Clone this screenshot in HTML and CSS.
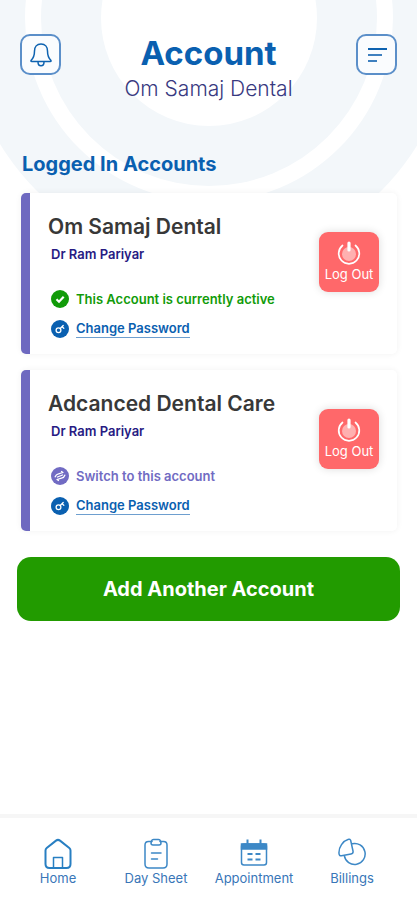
FILE: index.html
```html
<!DOCTYPE html>
<html lang="en">
<head>
<meta charset="utf-8">
<meta name="viewport" content="width=device-width, initial-scale=1">
<title>Account</title>
<link rel="stylesheet" href="styles.css">
</head>
<body>
<svg width="0" height="0" class="sprite" aria-hidden="true">
  <symbol id="power" viewBox="0 0 24 24">
    <circle cx="12" cy="13" r="7" fill="#ffb0b0"/>
    <path d="M5.500 4.500A10.300 10.300 0 1 0 18.500 4.500" fill="none" stroke="#fff" stroke-width="1.700" stroke-linecap="round"/>
    <path d="M12 2v7" stroke="#fff" stroke-width="3.200" stroke-linecap="round"/>
  </symbol>
  <symbol id="key" viewBox="0 0 18 18">
    <circle cx="9" cy="9" r="9" fill="#0a60b0"/>
    <circle cx="7.500" cy="10.200" r="2.400" fill="none" stroke="#fff" stroke-width="1.300"/>
    <path d="M9.200 8.500l3-3M11 6.700l1.800 1.600" fill="none" stroke="#fff" stroke-width="1.300" stroke-linecap="round"/>
  </symbol>
</svg>
<div class="screen">
  <svg class="rings" viewBox="0 0 488 262" aria-hidden="true">
    <circle cx="244" cy="18" r="244" fill="#f3f7fa"/>
    <circle cx="244" cy="18" r="184" fill="#fff"/>
    <circle cx="244" cy="18" r="168" fill="#f3f7fa"/>
    <circle cx="244" cy="18" r="108" fill="#fff"/>
  </svg>
  <header class="header">
    <button class="icon-button" aria-label="Notifications">
      <svg width="24" height="26" viewBox="0 0 24 26" fill="none" stroke="#0d62b0" stroke-width="1.500" stroke-linecap="round" stroke-linejoin="round">
        <path d="M12 2C7.800 2 5.500 5 5.500 9c0 5-1 7-3.300 9.200-.6.700-.3 1.300.6 1.300h18.400c.9 0 1.200-.6.600-1.300C19.500 16 18.500 14 18.500 9c0-4-2.300-7-6.500-7zM9 20c0 2 1.200 3.800 3 3.800s3-1.800 3-3.800"/>
      </svg>
    </button>
    <div class="heading">
      <h1>Account</h1>
      <p>Om Samaj Dental</p>
    </div>
    <button class="icon-button" aria-label="Menu">
      <svg width="24" height="26" viewBox="0 0 24 26" fill="none" stroke="#0d62b0" stroke-width="2">
        <path d="M3 7h19"/><path d="M3 13h14M3 19h9" stroke="#3f80bf"/>
      </svg>
    </button>
  </header>
  <main class="main">
    <h2 class="section-title">Logged In Accounts</h2>
    <article class="card">
      <div class="details">
        <h3>Om Samaj Dental</h3>
        <p class="doctor">Dr Ram Pariyar</p>
        <p class="row active">
          <svg width="18" height="18" viewBox="0 0 18 18" aria-hidden="true"><circle cx="9" cy="9" r="9" fill="#119b09"/><path d="M5.500 9.200l2.500 2.500 4.700-5" fill="none" stroke="#fff" stroke-width="2.200"/></svg>
          <span>This Account is currently active</span>
        </p>
        <a class="row change" href="#password"><svg width="18" height="18" aria-hidden="true"><use href="#key"/></svg><span>Change Password</span></a>
      </div>
      <button class="logout"><svg width="24" height="24" aria-hidden="true"><use href="#power"/></svg>Log Out</button>
    </article>
    <article class="card">
      <div class="details">
        <h3>Adcanced Dental Care</h3>
        <p class="doctor">Dr Ram Pariyar</p>
        <a class="row switch" href="#switch">
          <svg width="18" height="18" viewBox="0 0 18 18" aria-hidden="true"><circle cx="9" cy="9" r="9" fill="#716bc3"/><path d="M4.200 9.800Q5 7.300 7.500 6.800L12 5.500l-1.500-1M13.800 8.200q-.8 2.500-3.300 3L6 12.500l1.500 1M6.500 10l5-2" fill="none" stroke="#fff" stroke-width="1.300" stroke-linecap="round" stroke-linejoin="round"/></svg>
          <span>Switch to this account</span>
        </a>
        <a class="row change" href="#password"><svg width="18" height="18" aria-hidden="true"><use href="#key"/></svg><span>Change Password</span></a>
      </div>
      <button class="logout"><svg width="24" height="24" aria-hidden="true"><use href="#power"/></svg>Log Out</button>
    </article>
    <button class="add">Add Another Account</button>
  </main>
  <nav class="tabs">
    <a href="#home">
      <svg width="28" height="32" viewBox="0 0 28 32" fill="none" stroke="#287fc2" stroke-width="2" stroke-linejoin="round"><path d="M1.500 12.500q0-1.500 1.200-2.500L12 2.600q2-1.500 4 0l9.300 7.400q1.200 1 1.200 2.500V26q0 4-4 4h-17q-4 0-4-4z"/><path d="M9.500 30V19.500h9V30" stroke-width="1.500"/></svg>
      Home</a>
    <a href="#day-sheet">
      <svg width="28" height="32" viewBox="0 0 28 32" fill="none" stroke="#3d88c6" stroke-width="1.500" stroke-linecap="round" stroke-linejoin="round"><path d="M10 3.500H6.500q-3.500 0-3.500 3.500v19q0 4 4 4h14q4 0 4-4V7q0-3.500-3.500-3.500H18"/><path d="M11.500 1.500h5q1.500 0 2 1.500l.5 2q0 2-2 2h-6q-2 0-2-2l.5-2q.5-1.500 2-1.500z"/><path d="M9.500 15h9.500M9.500 21h6"/></svg>
      Day Sheet</a>
    <a href="#appointment">
      <svg width="28" height="32" viewBox="0 0 28 32" fill="none" stroke="#3d88c6" stroke-width="1.500"><rect x="1.500" y="6" width="25" height="21" rx="2.500"/><path d="M1.500 6h25v5h-25z" fill="#3d88c6"/><path d="M7.500 1.500V7M20.500 1.500V7" stroke-width="2"/><path d="M7.500 16h5M15.500 16h5M7.500 21.500h5M15.500 21.500h5" stroke-width="2"/></svg>
      Appointment</a>
    <a href="#billings">
      <svg class="pie" width="28" height="32" viewBox="0 0 28 32" fill="none" stroke="#3d88c6" stroke-width="1.500" stroke-linecap="round" stroke-linejoin="round"><path d="M10.500 1.300C5 3 .5 9 1 15.500q.1 2.500 2.500 2.300L13 16q2.500-.5 2-3L12.700 2.500q-.5-1.800-2.200-1.200z"/><path d="M14 5.800A10.500 10.500 0 1 1 6.300 17.700"/></svg>
      Billings</a>
  </nav>
</div>
</body>
</html>
```
FILE: styles.css
```css
* { box-sizing: border-box; }
body {
  margin: 0;
  background: #fff;
  font-family: Inter, "Open Sans", sans-serif;
}
h1, h2, h3, p { margin: 0; }
button { font-family: inherit; border: 0; padding: 0; cursor: pointer; }
a { color: inherit; text-decoration: none; }
svg { flex-shrink: 0; }
.sprite { position: absolute; }
.screen {
  position: relative;
  min-height: 100vh;
  display: flex;
  flex-direction: column;
  overflow: hidden;
}
.rings {
  position: absolute;
  top: 0;
  left: 50%;
  width: 488px;
  transform: translateX(-50%);
}
.header, .main, .tabs { position: relative; }
.header {
  display: flex;
  justify-content: space-between;
  align-items: flex-start;
  padding: 34px 20px 0;
}
.icon-button {
  width: 41px;
  height: 41px;
  display: grid;
  place-items: center;
  background: #fafcfe;
  border: 2px solid #5b8fc9;
  border-radius: 10px;
}
.heading { text-align: center; }
h1 {
  font-size: 33px;
  line-height: 38px;
  font-weight: 700;
  color: #0a60b0;
}
.heading p {
  margin-top: 3px;
  font-size: 21px;
  line-height: 28px;
  font-weight: 300;
  color: #38397f;
}
.main {
  flex: 1;
  display: flex;
  flex-direction: column;
  padding: 49px 20px 24px;
}
.section-title {
  padding-left: 2px;
  font-size: 20px;
  line-height: 24px;
  font-weight: 700;
  color: #0a60b0;
}
.card {
  display: flex;
  justify-content: space-between;
  align-items: flex-start;
  min-height: 161px;
  margin: 17px 0 0 1px;
  padding: 20px 18px 12px 18px;
  background: #fff;
  border-left: 9px solid #6e69c0;
  border-radius: 5px;
  box-shadow: 0 0 6px rgba(0, 0, 0, 0.06);
}
.card + .card { margin-top: 16px; }
h3 {
  font-size: 21px;
  line-height: 28px;
  font-weight: 600;
  color: #383838;
}
.doctor {
  padding: 3px 0 0 3px;
  margin-bottom: 26px;
  font-size: 13px;
  line-height: 20px;
  font-weight: 600;
  color: #271b83;
}
.row {
  display: flex;
  align-items: center;
  gap: 7px;
  padding-left: 3px;
  font-size: 13px;
  line-height: 18px;
  font-weight: 600;
}
.change { margin-top: 11px; color: #0a60b0; }
.change span { border-bottom: 1px solid #6e9fcf; }
.active { color: #119b09; }
.switch { color: #716bc3; }
.logout {
  width: 60px;
  height: 60px;
  margin-top: 19px;
  display: flex;
  flex-direction: column;
  align-items: center;
  justify-content: center;
  flex-shrink: 0;
  background: #ff686a;
  border-radius: 9px;
  box-shadow: 0 0 8px rgba(0, 0, 0, 0.14);
  color: #fff;
  font-size: 13px;
  line-height: 18px;
}
.add {
  height: 64px;
  margin: 26px -3px 0;
  border-radius: 14px;
  background: #229b00;
  color: #fff;
  font-size: 20px;
  font-weight: 700;
}
.tabs {
  display: grid;
  grid-template-columns: repeat(4, 1fr);
  padding: 20px 16px 14px 9px;
  border-top: 4px solid #f6f6f6;
  background: #fff;
}
.tabs a {
  display: flex;
  flex-direction: column;
  align-items: center;
  font-size: 13px;
  line-height: 16px;
  color: #3976b8;
}
```
